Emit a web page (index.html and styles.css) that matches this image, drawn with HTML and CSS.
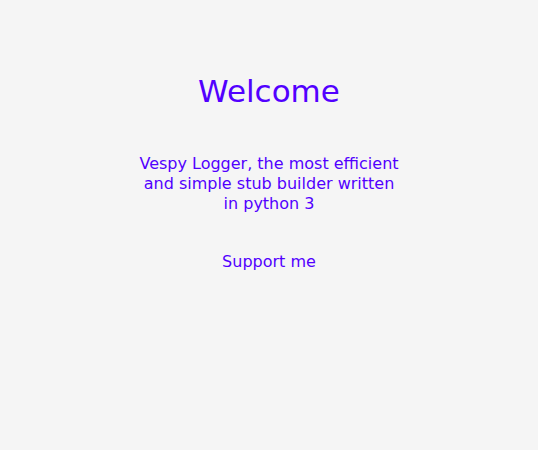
FILE: index.html
```html
<!DOCTYPE html>
<html>
<head>
<meta charset="utf-8">
<title>Vespy Logger</title>
<link rel="stylesheet" href="styles.css">
</head>
<body>
<main class="page">
  <h1 class="title">Welcome</h1>
  <p class="intro">Vespy Logger, the most efficient and simple stub builder written in python 3</p>
  <a class="support" href="#">Support me</a>
</main>
</body>
</html>
```
FILE: styles.css
```css
html, body {
  margin: 0;
  padding: 0;
  background: #f5f5f5;
}
body {
  font-family: "DejaVu Sans", sans-serif;
  color: #5200ff;
}
.page {
  display: flex;
  flex-direction: column;
  align-items: center;
  padding-top: 73px;
  text-align: center;
}
.title {
  margin: 0;
  font-size: 31px;
  font-weight: normal;
  line-height: 37px;
}
.intro {
  margin: 44px 0 0;
  width: 270px;
  font-size: 16px;
  line-height: 20px;
}
.support {
  margin-top: 38px;
  font-size: 16px;
  line-height: 20px;
  color: #5200ff;
  text-decoration: none;
}
```
